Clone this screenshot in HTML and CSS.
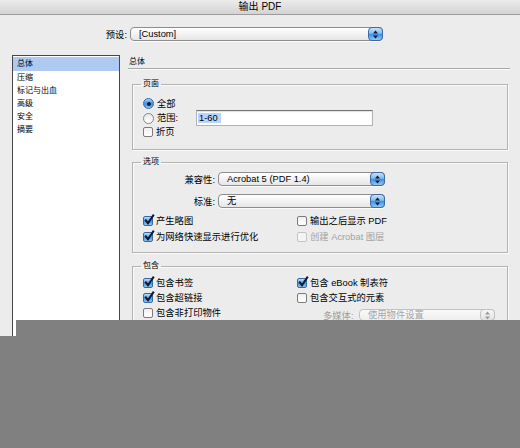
FILE: index.html
```html
<!DOCTYPE html>
<html lang="zh">
<head>
<meta charset="utf-8">
<title>输出 PDF</title>
<link rel="stylesheet" href="styles.css">
</head>
<body>
<div class="window">
  <div class="titlebar">输出 PDF</div>

  <div class="preset">
    <span class="preset-label">预设:</span>
    <div class="popup preset-popup"><span class="txt">[Custom]</span><span class="cap"><svg width="7" height="9" viewBox="0 0 7 9"><path d="M3.5 0.5 L6 3.5 H1Z M3.5 8.5 L6 5.5 H1Z" fill="#0e1c38"/></svg></span></div>
  </div>

  <div class="main">
    <ul class="sidebar">
      <li class="sel">总体</li>
      <li>压缩</li>
      <li>标记与出血</li>
      <li>高级</li>
      <li>安全</li>
      <li>摘要</li>
    </ul>

    <div class="content">
      <div class="heading">总体</div>

      <fieldset class="group g1">
        <legend>页面</legend>
        <div class="inner">
          <div class="row r1"><span class="radio on"></span><span class="lbl">全部</span></div>
          <div class="row r2"><span class="radio"></span><span class="lbl range">范围:</span><div class="field"><span class="seltext">1-60</span></div></div>
          <div class="row r3"><span class="cb"></span><span class="lbl">折页</span></div>
        </div>
      </fieldset>

      <fieldset class="group g2">
        <legend>选项</legend>
        <div class="inner">
          <div class="prow"><span class="plabel">兼容性:</span><div class="popup wide"><span class="txt">Acrobat 5 (PDF 1.4)</span><span class="cap"><svg width="7" height="9" viewBox="0 0 7 9"><path d="M3.5 0.5 L6 3.5 H1Z M3.5 8.5 L6 5.5 H1Z" fill="#0e1c38"/></svg></span></div></div>
          <div class="prow second"><span class="plabel">标准:</span><div class="popup wide"><span class="txt">无</span><span class="cap"><svg width="7" height="9" viewBox="0 0 7 9"><path d="M3.5 0.5 L6 3.5 H1Z M3.5 8.5 L6 5.5 H1Z" fill="#0e1c38"/></svg></span></div></div>
          <div class="cols">
            <div class="col left">
              <div class="crow"><span class="cb on"><svg class="tick" width="12" height="12" viewBox="0 0 12 12"><path d="M2.2 5.6 L5 9.2 L10.8 0.6" fill="none" stroke="#0d1a36" stroke-width="2"/></svg></span><span class="lbl">产生略图</span></div>
              <div class="crow"><span class="cb on"><svg class="tick" width="12" height="12" viewBox="0 0 12 12"><path d="M2.2 5.6 L5 9.2 L10.8 0.6" fill="none" stroke="#0d1a36" stroke-width="2"/></svg></span><span class="lbl">为网络快速显示进行优化</span></div>
            </div>
            <div class="col right">
              <div class="crow"><span class="cb"></span><span class="lbl">输出之后显示 PDF</span></div>
              <div class="crow dis"><span class="cb"></span><span class="lbl">创建 Acrobat 图层</span></div>
            </div>
          </div>
        </div>
      </fieldset>

      <fieldset class="group g3">
        <legend>包含</legend>
        <div class="inner">
          <div class="cols">
            <div class="col left">
              <div class="crow"><span class="cb on"><svg class="tick" width="12" height="12" viewBox="0 0 12 12"><path d="M2.2 5.6 L5 9.2 L10.8 0.6" fill="none" stroke="#0d1a36" stroke-width="2"/></svg></span><span class="lbl">包含书签</span></div>
              <div class="crow"><span class="cb on"><svg class="tick" width="12" height="12" viewBox="0 0 12 12"><path d="M2.2 5.6 L5 9.2 L10.8 0.6" fill="none" stroke="#0d1a36" stroke-width="2"/></svg></span><span class="lbl">包含超链接</span></div>
              <div class="crow"><span class="cb"></span><span class="lbl">包含非打印物件</span></div>
            </div>
            <div class="col right">
              <div class="crow"><span class="cb on"><svg class="tick" width="12" height="12" viewBox="0 0 12 12"><path d="M2.2 5.6 L5 9.2 L10.8 0.6" fill="none" stroke="#0d1a36" stroke-width="2"/></svg></span><span class="lbl">包含 eBook 制表符</span></div>
              <div class="crow"><span class="cb"></span><span class="lbl">包含交互式的元素</span></div>
              <div class="mrow"><span class="mlabel">多媒体:</span><div class="popup disabled media"><span class="txt">使用物件设置</span><span class="cap"><svg width="7" height="9" viewBox="0 0 7 9"><path d="M3.5 0.5 L6 3.5 H1Z M3.5 8.5 L6 5.5 H1Z" fill="#9a9a9a"/></svg></span></div></div>
            </div>
          </div>
        </div>
      </fieldset>
    </div>
  </div>
</div>
<div class="shade"></div>
</body>
</html>
```
FILE: styles.css
```css
* { box-sizing: border-box; }
html, body { margin: 0; padding: 0; }
body {
  width: 520px;
  height: 448px;
  position: relative;
  overflow: hidden;
  background: #808080;
  font-family: "Liberation Sans", "Noto Sans CJK SC", sans-serif;
  font-size: 9.3px;
  color: #000;
}
.window {
  height: 336px;
  overflow: hidden;
  background: #ececec;
}
.titlebar {
  height: 15px;
  line-height: 14px;
  text-align: center;
  font-size: 10px;
  background: linear-gradient(#ececec, #d3d3d3);
  border-bottom: 1px solid #9c9c9c;
}
.preset {
  display: flex;
  align-items: center;
  margin-top: 12px;
  height: 14px;
}
.preset-label {
  width: 130px;
  text-align: right;
  padding-right: 3px;
}
.popup {
  display: flex;
  align-items: center;
  height: 14px;
  border: 1px solid #8d8d8d;
  border-radius: 4px;
  background: linear-gradient(#ffffff, #e6e6e6);
  padding-left: 8px;
  box-shadow: 0 1px 0 rgba(255,255,255,.8);
}
.popup .txt { flex: 1; line-height: 12px; white-space: nowrap; }
.popup .cap {
  width: 15px;
  height: 14px;
  margin: -1px -1px -1px 0;
  border: 1px solid #3b6aa6;
  border-radius: 4px;
  background: linear-gradient(#cbe4fb 0%, #7db8f0 45%, #3f8fe0 52%, #8fc6f6 100%);
  display: flex;
  align-items: center;
  justify-content: center;
}
.preset-popup { width: 253px; }

.main {
  display: flex;
  margin-top: 14px;
}
.sidebar {
  list-style: none;
  margin: 0 0 0 12px;
  padding: 0;
  width: 108px;
  height: 290px;
  background: #fff;
  border: 1px solid #474747;
  font-size: 8px;
}
.sidebar li {
  height: 13px;
  line-height: 13px;
  padding-left: 4px;
}
.sidebar li.sel {
  height: 14px;
  line-height: 14px;
  margin-top: 1px;
  background: #aecaf2;
}

.content {
  margin-left: 8px;
  width: 382px;
}
.heading {
  height: 14px;
  line-height: 13px;
  font-size: 8px;
  padding-left: 1px;
  border-bottom: 1px solid #a9a9a9;
  box-shadow: 0 1px 0 #fafafa;
}
.group {
  margin: 0 0 0 4px;
  padding: 0;
  width: 376px;
  border: 1px solid #b3b3b3;
  box-shadow: 1px 1px 0 #fbfbfb, inset 1px 1px 0 #fbfbfb;
  min-width: 0;
}
.group legend {
  margin-left: 8px;
  padding: 0 2px;
  font-size: 8px;
  line-height: 12px;
}
.g1 { margin-top: 9px; }
.g2 { margin-top: 6px; }
.g3 { margin-top: 7px; }
.g1 .inner { height: 59px; padding: 7px 0 0 10px; }
.g2 .inner { height: 84px; padding: 4px 0 0 0; }
.g3 .inner { height: 80px; padding: 3px 0 0 0; }

.row { display: flex; align-items: center; }
.r1 { height: 13px; }
.r2 { height: 16px; }
.r3 { height: 12px; }
.lbl { margin-left: 3px; white-space: nowrap; line-height: 12px; }
.range { width: 39px; }

.radio {
  width: 11px;
  height: 11px;
  border-radius: 50%;
  border: 1px solid #848484;
  background: linear-gradient(#e9e9e9, #ffffff);
  position: relative;
  flex: none;
}
.radio.on {
  border-color: #3a68a3;
  background: linear-gradient(#a9d2f8, #3b8ce0 55%, #8dc6f6);
}
.radio.on::after {
  content: "";
  position: absolute;
  left: 2.5px;
  top: 2.5px;
  width: 4px;
  height: 4px;
  border-radius: 50%;
  background: #0d1a33;
}
.field {
  width: 177px;
  height: 16px;
  background: #fff;
  border: 1px solid #b2b2b2;
  border-top-color: #737373;
  box-shadow: inset 0 1px 1px rgba(0,0,0,.12);
  padding: 1px 0 0 1px;
  line-height: 12px;
}
.seltext { background: #b5d5fe; padding: 0 3px 0 1px; }

.cb {
  width: 10px;
  height: 10px;
  flex: none;
  border: 1px solid #7c7c7c;
  border-radius: 2px;
  background: linear-gradient(#f0f0f0, #ffffff);
  position: relative;
}
.cb.on {
  border-color: #3a68a3;
  background: linear-gradient(#b9dcfa, #4b99e3 55%, #8bc3f3);
}
.tick { position: absolute; left: -1px; top: -3px; }

.prow { display: flex; align-items: center; height: 14px; }
.prow.second { margin-top: 8px; }
.plabel { width: 82px; text-align: right; white-space: nowrap; }
.popup.wide { width: 167px; margin-left: 3px; }

.cols { display: flex; padding-left: 10px; }
.g2 .cols { margin-top: 5px; }
.col.left { width: 154px; flex: none; }
.crow { display: flex; align-items: center; height: 15px; }
.g2 .crow { height: 16px; }
.crow.dis { color: #a3a3a3; }
.crow.dis .cb { border-color: #c4c4c4; background: #f4f4f4; }

.mrow { display: flex; align-items: center; height: 14px; margin-top: 3px; margin-left: 26px; color: #9c9c9c; }
.mlabel { width: 36px; flex: none; white-space: nowrap; }
.popup.disabled { border-color: #c2c2c2; background: linear-gradient(#fafafa, #eeeeee); color: #a6a6a6; height: 12px; }
.popup.disabled .cap { height: 12px; border-color: #c2c2c2; background: linear-gradient(#f6f6f6, #e2e2e2); }
.popup.media { width: 136px; flex: none; }

.shade {
  position: absolute;
  left: 16px;
  top: 320px;
  right: 0;
  height: 16px;
  background: #808080;
}
```
